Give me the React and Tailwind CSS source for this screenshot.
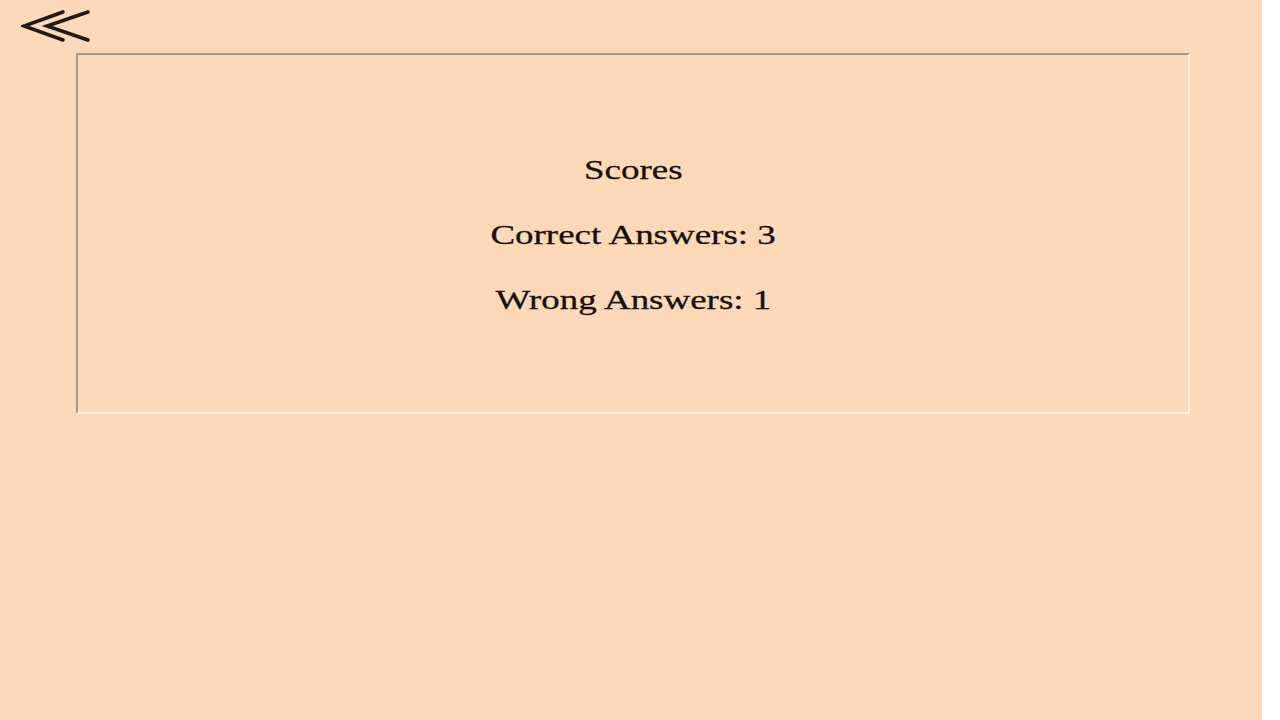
export default function App() {
  return (
    <div className="flex h-[720px] w-[1280px] bg-white">
      <div className="h-full w-[1262px] bg-[#fdd9b9] font-['Liberation_Serif',serif] text-[#141210]">
        {/* Back */}
        <div className="flex h-[53px] items-start pl-[21px] pt-[9px]">
          <svg width="70" height="34" viewBox="0 0 70 34" fill="none" stroke="#1e1a16" strokeWidth="3.5" strokeLinecap="round" strokeLinejoin="miter">
            <path d="M42 3 L3 17 L42 31" />
            <path d="M67 3 L26 17 L67 31" />
          </svg>
        </div>

        {/* Score box */}
        <div className="ml-[76px] flex h-[361px] w-[1114px] flex-col items-center justify-center gap-[36px] border-2 border-t-[#a59b92] border-l-[#a59b92] border-r-[#fff4e0] border-b-[#fff4e0] pt-[2px]">
          <p className="scale-x-[1.32] text-[28px] leading-[29px] [-webkit-text-stroke:0.3px_#141210]">Scores</p>
          <p className="scale-x-[1.32] text-[28px] leading-[29px] [-webkit-text-stroke:0.3px_#141210]">Correct Answers: 3</p>
          <p className="scale-x-[1.32] text-[28px] leading-[29px] [-webkit-text-stroke:0.3px_#141210]">Wrong Answers: 1</p>
        </div>
      </div>
    </div>
  );
}
